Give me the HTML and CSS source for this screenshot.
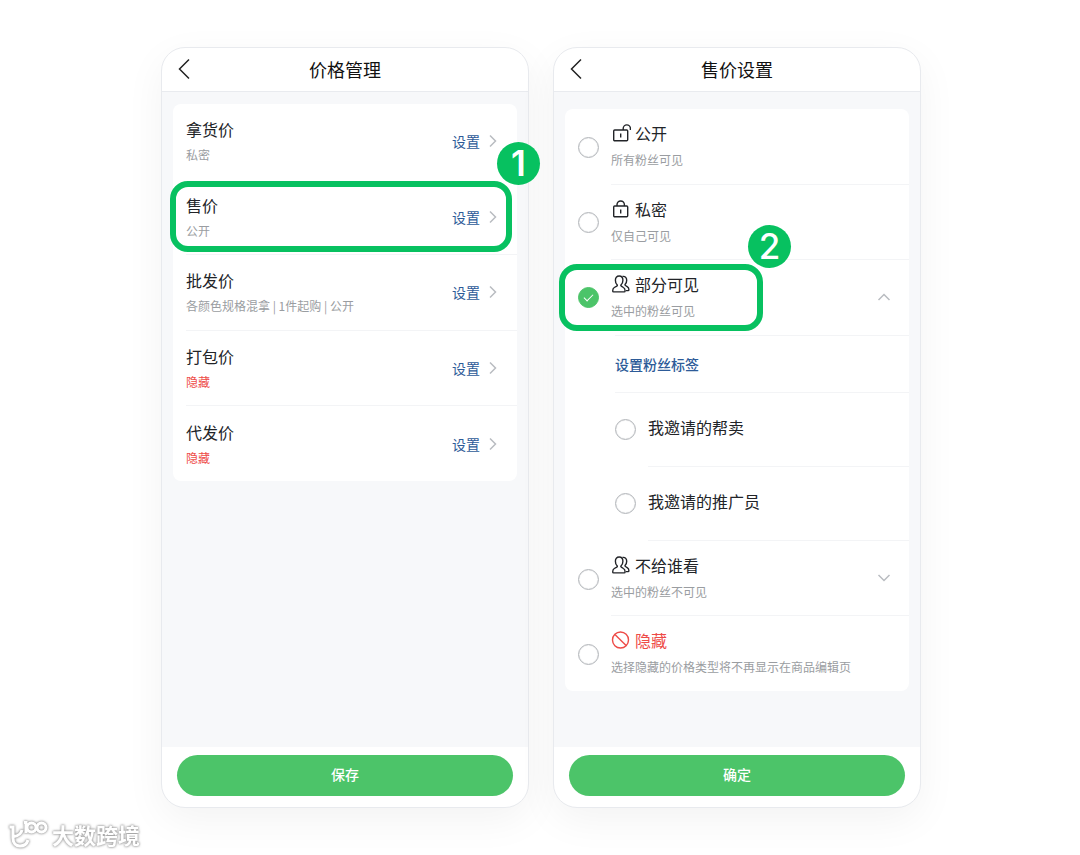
FILE: index.html
```html
<!DOCTYPE html>
<html lang="zh-CN">
<head>
    <meta charset="UTF-8">
    <meta name="viewport" content="width=device-width, initial-scale=1.0">
    <title>价格管理</title>
    <link rel="stylesheet" href="styles.css">
</head>
<body>

<!-- shared icons -->
<svg class="sprite" aria-hidden="true">
    <symbol id="icon-back" viewBox="0 0 12 22"><path d="M11 1.5 1.5 11 11 20.500"/></symbol>
    <symbol id="icon-right" viewBox="0 0 8 14"><path d="M1 1.500 6.500 7 1 12.500"/></symbol>
    <symbol id="icon-up" viewBox="0 0 14 8"><path d="M1.500 7 7 1.500 12.500 7"/></symbol>
    <symbol id="icon-down" viewBox="0 0 14 8"><path d="M1.500 1 7 6.500 12.500 1"/></symbol>
    <symbol id="icon-unlock" viewBox="0 0 20 18">
        <rect x="2.700" y="6" width="14" height="10.800" rx="1"/>
        <path d="M9.700 9.500v4M12.200 6V4.500a3.600 3.600 0 0 1 7.200 0V6"/>
    </symbol>
    <symbol id="icon-lock" viewBox="0 0 20 18">
        <rect x="2.700" y="6" width="14" height="10.800" rx="1"/>
        <path d="M9.700 9.500v4M6 6V4.700a3.700 3.700 0 0 1 7.400 0V6"/>
    </symbol>
    <symbol id="icon-people" viewBox="0 0 20 18">
        <path d="M8.200 1C5.700 1 4.400 2.700 4.400 5.200c0 2 .6 3.500 1.700 4.500.4.500.3 1.100-.3 1.400L3.300 12.500c-1.200.7-1.600 1.600-1.600 3.500 0 .6.300.9.900.9h10.600c.6 0 .9-.3.900-.9 0-1.900-.5-2.800-1.700-3.500l-2.100-1.400c-.6-.4-.7-.9-.2-1.400 1.100-1 1.800-2.500 1.800-4.500C11.900 2.700 10.700 1 8.200 1z"/>
        <path d="M11.500 1.500c2.600-.5 4.200 1.200 4.200 3.700 0 1.700-.6 3-1.500 4-.4.500-.3 1 .2 1.300l1.800 1.100c1.200.7 1.700 1.600 1.700 3.200 0 .5-.3.800-.8.800h-2.200"/>
    </symbol>
    <symbol id="icon-ban" viewBox="0 0 20 18"><circle cx="9.500" cy="9" r="8"/><path d="M3.900 3.400 15.100 14.600"/></symbol>
</svg>

<main class="page">
    <section class="phone">
        <header class="bar">
            <button class="back" type="button" aria-label="返回"><svg><use href="#icon-back"/></svg></button>
            <h1>价格管理</h1>
        </header>
        <div class="content">
            <ul class="card prices">
                <li class="row">
                    <div class="text"><h2>拿货价</h2><p>私密</p></div>
                    <a class="set" href="#">设置<svg><use href="#icon-right"/></svg></a>
                </li>
                <li class="row marked">
                    <div class="text"><h2>售价</h2><p>公开</p></div>
                    <a class="set" href="#">设置<svg><use href="#icon-right"/></svg></a>
                    <span class="mark"><b class="step">1</b></span>
                </li>
                <li class="row">
                    <div class="text"><h2>批发价</h2><p>各颜色规格混拿 | 1件起购 | 公开</p></div>
                    <a class="set" href="#">设置<svg><use href="#icon-right"/></svg></a>
                </li>
                <li class="row">
                    <div class="text"><h2>打包价</h2><p class="red">隐藏</p></div>
                    <a class="set" href="#">设置<svg><use href="#icon-right"/></svg></a>
                </li>
                <li class="row">
                    <div class="text"><h2>代发价</h2><p class="red">隐藏</p></div>
                    <a class="set" href="#">设置<svg><use href="#icon-right"/></svg></a>
                </li>
            </ul>
        </div>
        <footer class="foot"><button class="submit" type="button">保存</button></footer>
    </section>

    <section class="phone">
        <header class="bar">
            <button class="back" type="button" aria-label="返回"><svg><use href="#icon-back"/></svg></button>
            <h1>售价设置</h1>
        </header>
        <div class="content content-options">
            <ul class="card options">
                <li class="option">
                    <input class="radio" type="radio" name="scope" id="scope-public">
                    <label class="text" for="scope-public">
                        <span class="name"><svg><use href="#icon-unlock"/></svg>公开</span>
                        <span class="note">所有粉丝可见</span>
                    </label>
                </li>
                <li class="option">
                    <input class="radio" type="radio" name="scope" id="scope-private">
                    <label class="text" for="scope-private">
                        <span class="name"><svg><use href="#icon-lock"/></svg>私密</span>
                        <span class="note">仅自己可见</span>
                    </label>
                </li>
                <li class="option marked">
                    <input class="radio" type="radio" name="scope" id="scope-some" checked>
                    <label class="text" for="scope-some">
                        <span class="name"><svg><use href="#icon-people"/></svg>部分可见</span>
                        <span class="note">选中的粉丝可见</span>
                    </label>
                    <button class="toggle" type="button" aria-label="收起"><svg><use href="#icon-up"/></svg></button>
                    <span class="mark mark-option"><b class="step">2</b></span>
                </li>
                <li class="tags"><a href="#">设置粉丝标签</a></li>
                <li class="tag">
                    <input class="radio" type="checkbox" id="tag-seller">
                    <label for="tag-seller">我邀请的帮卖</label>
                </li>
                <li class="tag">
                    <input class="radio" type="checkbox" id="tag-promoter">
                    <label for="tag-promoter">我邀请的推广员</label>
                </li>
                <li class="option">
                    <input class="radio" type="radio" name="scope" id="scope-except">
                    <label class="text" for="scope-except">
                        <span class="name"><svg><use href="#icon-people"/></svg>不给谁看</span>
                        <span class="note">选中的粉丝不可见</span>
                    </label>
                    <button class="toggle" type="button" aria-label="展开"><svg><use href="#icon-down"/></svg></button>
                </li>
                <li class="option">
                    <input class="radio" type="radio" name="scope" id="scope-hidden">
                    <label class="text" for="scope-hidden">
                        <span class="name red"><svg><use href="#icon-ban"/></svg>隐藏</span>
                        <span class="note">选择隐藏的价格类型将不再显示在商品编辑页</span>
                    </label>
                </li>
            </ul>
        </div>
        <footer class="foot"><button class="submit" type="button">确定</button></footer>
    </section>
</main>

<div class="watermark">
    <svg viewBox="0 0 40 28">
        <path d="M1.500 7H5v11c0 5 3 8 7 8 4.500 0 7-2.500 8-6M14 10c-1 4-4 6-8 6.500M16 2.500h2V13"/>
        <circle cx="23.500" cy="7.500" r="4.500"/>
        <circle cx="33.500" cy="7.500" r="4.500"/>
    </svg>
    <span>大数跨境</span>
</div>

</body>
</html>
```
FILE: styles.css
```css
* {
    margin: 0;
    padding: 0;
    box-sizing: border-box;
}

body {
    background-color: #fff;
    color: #222428;
    font-family: "Noto Sans CJK SC", sans-serif;
    font-size: 16px;
}

h1, h2 {
    font-weight: 400;
}

ul {
    list-style: none;
}

a {
    color: #2d5b98;
    text-decoration: none;
}

button {
    border: 0;
    background: none;
    font-family: inherit;
    cursor: pointer;
}

svg {
    display: block;
    fill: none;
    stroke: currentColor;
}

.sprite {
    position: absolute;
    width: 0;
    height: 0;
}

.page {
    display: grid;
    grid-template-columns: 1fr 1fr;
    gap: 24px;
    min-height: 100vh;
    padding: 47px 159px 47px 161px;
}

.phone {
    display: flex;
    flex-direction: column;
    border: 1px solid #e8eaee;
    border-radius: 24px;
    background-color: #fff;
    box-shadow: 0 12px 40px rgba(0, 0, 0, 0.05);
}

.bar {
    display: grid;
    grid-template-columns: 44px 1fr 44px;
    align-items: center;
    height: 44px;
    padding-bottom: 2px;
    border-bottom: 1px solid #e9ebef;
}

.bar h1 {
    color: #111;
    font-size: 18px;
    line-height: 24px;
    text-align: center;
}

.back {
    padding-left: 16px;
    color: #222;
}

.back svg {
    width: 12px;
    height: 22px;
    stroke-width: 1.5;
}

.content {
    flex: 1;
    padding: 12px 11px;
    background-color: #f7f8fa;
}

.content-options {
    padding-top: 17px;
}

.card {
    display: flex;
    flex-direction: column;
    border-radius: 8px;
    background-color: #fff;
}

.prices {
    min-height: 377px;
}

.options {
    min-height: 582px;
}

/* price rows */
.row {
    display: flex;
    flex: 1;
    align-items: center;
    margin-left: 13px;
    padding-right: 20px;
}

.row + .row,
.option + .option .text {
    border-top: 1px solid #f3f4f6;
}

.row.marked {
    border-top-color: transparent;
}

.row .text {
    flex: 1;
}

.row h2 {
    font-size: 16px;
    line-height: 24px;
}

.row p {
    margin-top: 4px;
    color: #9a9da1;
    font-size: 12px;
    line-height: 20px;
}

.row .red,
.name.red {
    color: #ee4b47;
}

.set {
    display: flex;
    align-items: center;
    gap: 9px;
    font-size: 14px;
    line-height: 20px;
}

.set svg {
    width: 8px;
    height: 14px;
    color: #b9bcc1;
    stroke-width: 1.5;
}

/* visibility options */
.option {
    display: flex;
    flex: 1;
    align-items: center;
    padding-left: 13px;
}

.option .text {
    display: flex;
    flex: 1;
    flex-direction: column;
    align-self: stretch;
    gap: 5px;
    margin-left: 12px;
    padding-top: 12px;
}

.name {
    display: flex;
    align-items: center;
    gap: 4px;
    line-height: 24px;
}

.name svg {
    width: 20px;
    height: 18px;
    stroke-width: 1.4;
}

.note {
    color: #9a9da1;
    font-size: 12px;
    line-height: 20px;
}

.radio {
    appearance: none;
    display: grid;
    place-items: center;
    flex: none;
    width: 21px;
    height: 21px;
    border: 1px solid #b4b7bb;
    border-radius: 50%;
    background-color: #fff;
    box-shadow: inset 0 0 1px #b4b7bb;
}

.option .radio {
    margin-top: 2px;
}

.radio:checked {
    border-color: #4cc469;
    background-color: #4cc469;
    box-shadow: none;
}

.radio:checked::after {
    content: "";
    width: 8px;
    height: 4px;
    margin-bottom: 3px;
    border: solid #fff;
    border-width: 0 0 1px 1px;
    transform: rotate(-45deg);
}

.toggle {
    align-self: stretch;
    padding: 0 18px;
    border-top: 1px solid #f3f4f6;
    color: #b9bcc1;
}

.toggle svg {
    width: 14px;
    height: 8px;
    stroke-width: 1.5;
}

.tags {
    margin-left: 50px;
    padding: 18px 0;
    border-top: 1px solid #f3f4f6;
    border-bottom: 1px solid #f3f4f6;
    font-size: 14px;
    font-weight: 500;
    line-height: 20px;
}

.tag {
    display: flex;
    align-items: center;
    gap: 12px;
    margin-left: 50px;
}

.tag label {
    flex: 1;
    height: 74px;
    padding-top: 22px;
    border-bottom: 1px solid #f3f4f6;
    line-height: 24px;
}

.tag + .option .toggle {
    border-top: 0;
}

/* step highlights */
.marked {
    position: relative;
}

.mark {
    position: absolute;
    top: 1px;
    right: 5px;
    bottom: 2px;
    left: -16px;
    border: 6px solid #07c160;
    border-radius: 18px;
    pointer-events: none;
}

.mark-option {
    top: 5px;
    right: auto;
    bottom: 4px;
    left: -6px;
    width: 204px;
}

.step {
    position: absolute;
    top: -45px;
    right: -34px;
    width: 43px;
    height: 43px;
    border-radius: 50%;
    background-color: #07c160;
    color: #fff;
    font-family: Inter, sans-serif;
    font-size: 35px;
    font-weight: 600;
    line-height: 43px;
    text-align: center;
}

.mark-option .step {
    font-weight: 500;
}

.foot {
    padding: 8px 15px 11px;
}

.submit {
    width: 100%;
    height: 41px;
    padding-bottom: 3px;
    border-radius: 21px;
    background-color: #4cc469;
    color: #fff;
    font-size: 14px;
    font-weight: 500;
}

.watermark {
    position: fixed;
    bottom: 7px;
    left: 8px;
    display: flex;
    align-items: flex-end;
    gap: 4px;
    color: #fff;
    font-size: 22px;
    font-weight: 700;
    line-height: 28px;
    filter: drop-shadow(0 0 1px #999) drop-shadow(0 0 1px #bbb);
}

.watermark svg {
    width: 40px;
    height: 28px;
    stroke-width: 3;
}
```
